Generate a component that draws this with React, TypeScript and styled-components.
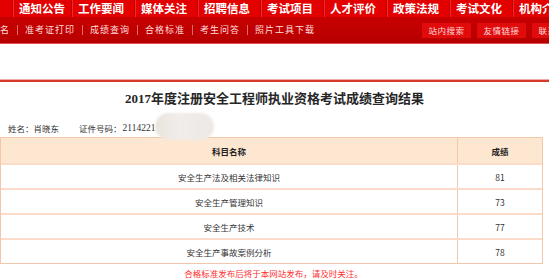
import styled, { createGlobalStyle } from 'styled-components';

const Global = createGlobalStyle`
  body {
    margin: 0;
    background: #fff;
    font-family: "Noto Sans CJK SC", "Noto Sans", sans-serif;
    overflow: hidden;
  }
`

const TopBar = styled.div`
  display: flex;
  height: 17px;
  background: #e20000;
  overflow: hidden;
  white-space: nowrap;
`
const TopItem = styled.div<{ $w: number }>`
  flex: none;
  width: ${p => p.$w}px;
  padding-left: 6px;
  box-sizing: border-box;
  border-left: 1px solid #c40000;
  box-shadow: inset 1px 0 0 #ee2a2a;
  color: #fff;
  font-size: 11.5px;
  font-weight: 700;
  line-height: 17px;
  &:first-child { border-left: none; box-shadow: none; }
`
const SubBar = styled.div`
  display: flex;
  align-items: center;
  height: 26px;
  background: linear-gradient(#c80000, #b70000);
  border-bottom: 1px solid #e05050;
  overflow: hidden;
  white-space: nowrap;
`
const SubItem = styled.span`
  flex: none;
  color: #ffdede;
  font-size: 9px;
  letter-spacing: 1px;
  padding: 0 7px;
  line-height: 10px;
  border-left: 1px solid #e26a6a;
  &:first-child { border-left: none; padding-left: 0; }
`
const Spacer = styled.div`
  flex: 1;
`
const ButtonGroup = styled.div`
  display: flex;
  flex: none;
  width: 133px;
  overflow: hidden;
`
const SubButton = styled.span`
  flex: none;
  width: 49px;
  height: 15px;
  margin-left: 6px;
  background: #e10b0b;
  color: #ffdcdc;
  font-size: 8.5px;
  line-height: 15px;
  text-align: center;
  letter-spacing: 0.5px;
`
const Divider = styled.div`
  margin-top: 35px;
  height: 2px;
  border-top: 1px solid #eeaaaa;
  background: #d63a2a;
`
const Title = styled.h1`
  margin: 8px 0 0;
  height: 18px;
  line-height: 18px;
  text-align: center;
  font-family: "Liberation Serif", "Noto Sans CJK SC", serif;
  font-size: 13px;
  font-weight: 700;
  color: #262626;
`
const Info = styled.div`
  position: relative;
  display: flex;
  margin-top: 13px;
  padding-left: 8px;
  height: 14px;
  line-height: 14px;
  font-size: 8.5px;
  color: #333;
`
const InfoLabel = styled.span`
  margin-right: 20px;
`
const IdNumber = styled.span`
  font-family: "Liberation Serif", serif;
  font-size: 9.5px;
  margin-left: 1px;
`
const Blur = styled.div`
  position: absolute;
  left: 155px;
  top: -8px;
  width: 59px;
  height: 27px;
  border-radius: 14px;
  background: linear-gradient(90deg, #ebe4dd, #f0edea 40%, #ede9e5);
  filter: blur(0.8px);
  z-index: 1;
`
const Table = styled.div`
  margin-top: 2px;
  width: 543px;
  border: 1px solid #f3c7a9;
  box-sizing: border-box;
`
const Row = styled.div<{ $head?: boolean }>`
  display: grid;
  grid-template-columns: 456px 1fr;
  height: 25px;
  box-sizing: border-box;
  background: ${p => (p.$head ? '#fde7d0' : '#fff')};
  border-top: ${p => (p.$head ? 'none' : '2px solid #fcdcc8')};
  font-size: 8.5px;
  font-weight: ${p => (p.$head ? 700 : 400)};
  color: ${p => (p.$head ? '#222' : '#333')};
`
const Cell = styled.div`
  display: flex;
  align-items: center;
  justify-content: center;
  & + & { border-left: 1px solid #f3c7a9; }
`
const Note = styled.div`
  margin-top: 3px;
  text-align: center;
  font-size: 8.5px;
  line-height: 12px;
  color: #ff3030;
  padding-right: 2px;
`

const topNav: [string, number][] = [
  ['', 12], ['通知公告', 59], ['工作要闻', 63], ['媒体关注', 63], ['招聘信息', 63],
  ['考试项目', 63], ['人才评价', 63], ['政策法规', 63], ['考试文化', 63], ['机构介绍', 63],
]
const subNav = ['名', '准考证打印', '成绩查询', '合格标准', '考生问答', '照片工具下载']
const buttons = ['站内搜索', '友情链接', '联系我们']
const scores = [
  ['安全生产法及相关法律知识', '81'],
  ['安全生产管理知识', '73'],
  ['安全生产技术', '77'],
  ['安全生产事故案例分析', '78'],
]

export default function App() {
  return (
    <>
      <Global />
      <TopBar>
        {topNav.map(([t, w], i) => <TopItem key={i} $w={w}>{t}</TopItem>)}
      </TopBar>
      <SubBar>
        {subNav.map(t => <SubItem key={t}>{t}</SubItem>)}
        <Spacer />
        <ButtonGroup>
          {buttons.map(b => <SubButton key={b}>{b}</SubButton>)}
        </ButtonGroup>
      </SubBar>
      <Divider />
      <Title>2017年度注册安全工程师执业资格考试成绩查询结果</Title>
      <Info>
        <InfoLabel>姓名：肖晓东</InfoLabel>
        <span>证件号码：</span>
        <IdNumber>2114221</IdNumber>
        <Blur />
      </Info>
      <Table>
        <Row $head>
          <Cell>科目名称</Cell>
          <Cell>成绩</Cell>
        </Row>
        {scores.map(([name, s]) => (
          <Row key={name}>
            <Cell>{name}</Cell>
            <Cell>{s}</Cell>
          </Row>
        ))}
      </Table>
      <Note>合格标准发布后将于本网站发布，请及时关注。</Note>
    </>
  )
}
